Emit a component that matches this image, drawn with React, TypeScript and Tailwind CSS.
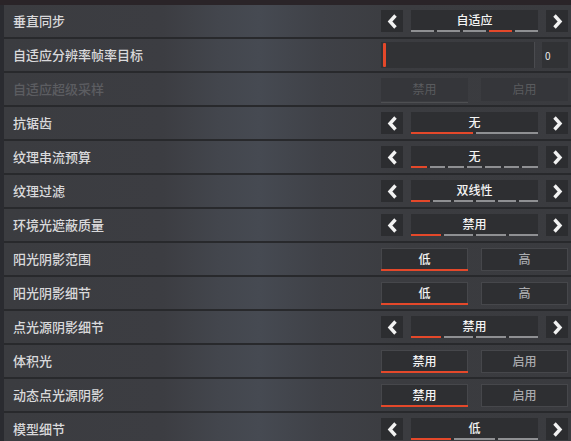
import React from "react";

type Row =
  | { label: string; kind: "select"; value: string; segs: number; active: number }
  | { label: string; kind: "toggle"; options: [string, string]; active: number; disabled?: boolean }
  | { label: string; kind: "slider"; value: string };

const rows: Row[] = [
  { label: "垂直同步", kind: "select", value: "自适应", segs: 5, active: 3 },
  { label: "自适应分辨率帧率目标", kind: "slider", value: "0" },
  { label: "自适应超级采样", kind: "toggle", options: ["禁用", "启用"], active: 0, disabled: true },
  { label: "抗锯齿", kind: "select", value: "无", segs: 2, active: 0 },
  { label: "纹理串流预算", kind: "select", value: "无", segs: 7, active: 0 },
  { label: "纹理过滤", kind: "select", value: "双线性", segs: 6, active: 0 },
  { label: "环境光遮蔽质量", kind: "select", value: "禁用", segs: 4, active: 0 },
  { label: "阳光阴影范围", kind: "toggle", options: ["低", "高"], active: 0 },
  { label: "阳光阴影细节", kind: "toggle", options: ["低", "高"], active: 0 },
  { label: "点光源阴影细节", kind: "select", value: "禁用", segs: 4, active: 0 },
  { label: "体积光", kind: "toggle", options: ["禁用", "启用"], active: 0 },
  { label: "动态点光源阴影", kind: "toggle", options: ["禁用", "启用"], active: 0 },
  { label: "模型细节", kind: "select", value: "低", segs: 3, active: 0 },
];

function Chevron({ dir }: { dir: "left" | "right" }) {
  return (
    <div className="w-[22px] h-[22px] bg-[#2c2d30] flex items-center justify-center">
      <svg width="11" height="15" viewBox="0 0 11 15" fill="none">
        <polyline
          points={dir === "left" ? "8.5,1.5 3,7.5 8.5,13.5" : "2.5,1.5 8,7.5 2.5,13.5"}
          stroke="#f2f2f2"
          strokeWidth="3.4"
          strokeLinejoin="miter"
        />
      </svg>
    </div>
  );
}

function Select({ value, segs, active }: { value: string; segs: number; active: number }) {
  return (
    <div className="flex items-center gap-[8px] w-[187px]">
      <Chevron dir="left" />
      <div className="flex-1 h-[22px] bg-[#2e2f32] flex flex-col">
        <div className="flex-1 flex items-center justify-center text-[12px] font-medium text-[#f4f4f4] pb-[1px]">
          {value}
        </div>
        <div className="flex gap-[3px] h-[2px]">
          {Array.from({ length: segs }).map((_, i) => (
            <div key={i} className={i === active ? "flex-1 bg-[#e4482a]" : "flex-1 bg-[#8f9093]"} />
          ))}
        </div>
      </div>
      <Chevron dir="right" />
    </div>
  );
}

function Toggle({ options, active, disabled }: { options: [string, string]; active: number; disabled?: boolean }) {
  return (
    <div className="flex gap-[13px] w-[187px]">
      {options.map((o, i) => (
        <div
          key={o}
          className={
            disabled
              ? "relative flex-1 h-[23px] bg-[#35363a] flex items-center justify-center text-[12px] text-[#5a5b5e]"
              : "relative flex-1 h-[23px] bg-[#2e2f32] border border-[#46474b] flex items-center justify-center text-[12px] font-medium " +
                (i === active ? "text-[#f4f4f4]" : "text-[#a9aaad]")
          }
        >
          {o}
          {i === active && (
            <div
              className={
                disabled
                  ? "absolute left-0 right-0 -bottom-[2px] h-[1px] bg-[#4e4f52]"
                  : "absolute -left-[1px] -right-[1px] -bottom-[1px] h-[2px] bg-[#e4482a]"
              }
            />
          )}
        </div>
      ))}
    </div>
  );
}

function Slider({ value }: { value: string }) {
  return (
    <div className="flex gap-[7px] w-[187px]">
      <div className="flex-1 h-[26px] bg-[#313235] border-r border-[#4a4b4f] flex items-center pl-[2px]">
        <div className="w-[3px] h-[24px] bg-[#e4482a] rounded-[1px]" />
      </div>
      <div className="w-[26px] h-[26px] bg-[#313235] flex items-center pl-[3px] text-[10px] text-[#e8e8e8]">
        {value}
      </div>
    </div>
  );
}

export default function App() {
  return (
    <div
      className="w-[571px] h-[441px] overflow-hidden bg-[#2a2529] flex flex-col"
      style={{ fontFamily: '"Noto Sans CJK SC", "Noto Sans", sans-serif' }}
    >
      <div className="h-[5px] shrink-0 bg-[#2a2428]" />
      <div className="flex flex-1 bg-[#2b2c31]">
        <div className="w-[4px] shrink-0 bg-[#2a2b30]" />
        <div className="flex-1 flex flex-col gap-[2px] bg-[#28292c]">
          {rows.map((r) => (
            <div
              key={r.label}
              className="h-[32px] shrink-0 flex items-center pl-[9px] pr-[3px] bg-[linear-gradient(90deg,#3b3c40_0%,#3c3d42_28%,#43464d_38%,#464a52_45%,#3f4147_56%,#3b3c40_70%,#3a3b3f_100%)]"
            >
              <div
                className={
                  r.kind === "toggle" && r.disabled
                    ? "flex-1 text-[13px] font-medium text-[#5c5d61]"
                    : "flex-1 text-[13px] font-medium text-[#d9d9db]"
                }
              >
                {r.label}
              </div>
              {r.kind === "select" && <Select value={r.value} segs={r.segs} active={r.active} />}
              {r.kind === "toggle" && <Toggle options={r.options} active={r.active} disabled={r.disabled} />}
              {r.kind === "slider" && <Slider value={r.value} />}
            </div>
          ))}
        </div>
      </div>
    </div>
  );
}
